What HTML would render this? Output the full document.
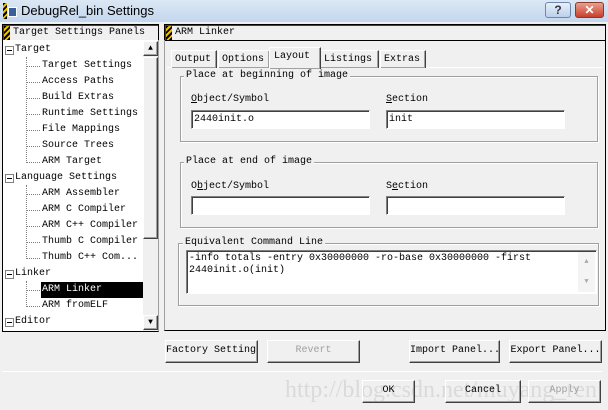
<!DOCTYPE html>
<html><head><style>
*{box-sizing:border-box;margin:0;padding:0}
body{width:608px;height:410px;background:#f0f0f0;position:relative;overflow:hidden;font-family:"Liberation Mono","Noto Sans CJK SC",monospace;font-size:10px;color:#000}
.a{position:absolute}
.t{white-space:pre;line-height:12px}
.title{left:0;top:0;width:608px;height:22px;background:linear-gradient(#dbe7f4,#c4d7ee);}
.sunk{border:1px solid;border-color:#a0a0a0 #fff #fff #a0a0a0;box-shadow:inset 1px 1px 0 #404040}
.raised{border:1px solid;border-color:#fff #404040 #404040 #fff;box-shadow:inset -1px -1px 0 #a0a0a0;background:#f0f0f0}
.grp{border:1px solid #a0a0a0;box-shadow:1px 1px 0 #fff inset,1px 1px 0 #fff}
.lab{background:#f0f0f0;padding:0 2px}
.inp{background:#fff;border:1px solid;border-color:#808080 #fff #fff #808080;box-shadow:inset 1px 1px 0 #404040}
.btn{text-align:center;line-height:20px;font-size:10px}
.icon{width:6px;height:14px;background:repeating-linear-gradient(135deg,#000 0 2px,#e8c000 2px 4px)}
.ti{position:absolute;left:42px;white-space:pre;line-height:16px;margin-top:2px}
.tr{position:absolute;left:15px;white-space:pre;line-height:16px;margin-top:2px}
.pm{position:absolute;left:5px;width:9px;height:9px;border:1px solid #808080;background:#fff;margin-top:2px}
.pm::after{content:"";position:absolute;left:1px;top:3px;width:5px;height:1px;background:#000}
.hd{position:absolute;left:27px;width:13px;border-top:1px dotted #808080}
</style></head><body>
<div class="a title"></div>
<div class="a" style="left:3px;top:3px;width:4px;height:16px;background:repeating-linear-gradient(135deg,#000 0 2px,#e8c000 2px 4px)"></div>
<div class="a" style="left:8px;top:7px;width:9px;height:10px;background:#3a5f9a;border:1px solid #fff"></div>
<div class="a" style="left:21px;top:2px;font-family:'Liberation Sans',sans-serif;font-size:13px;line-height:18px">DebugRel_bin Settings</div>
<div class="a" style="left:545px;top:2px;width:26px;height:16px;border:1px solid #6d88ad;border-radius:3px;background:linear-gradient(#e8f0fa,#bcd0ea);text-align:center;font:bold 12px 'Liberation Sans';line-height:14px;color:#334">?</div>
<div class="a" style="left:575px;top:2px;width:29px;height:16px;border:1px solid #8b3a2a;border-radius:3px;background:linear-gradient(#e8a090,#c8412c);text-align:center;font:bold 12px 'Liberation Sans';line-height:14px;color:#fff">✕</div>

<div class="a sunk" style="left:2px;top:24px;width:157px;height:17px;border-color:#000"></div>
<div class="a icon" style="left:4px;top:26px"></div>
<div class="a t" style="left:13px;top:27px">Target Settings Panels</div>
<div class="a" style="left:2px;top:40px;width:157px;height:292px;background:#fff;border:1px solid #000;border-top:none;border-right-color:#a0a0a0"></div>
<div class="a" style="left:143px;top:41px;width:15px;height:290px;background:#f0f0f0"></div>
<div class="a raised" style="left:143px;top:41px;width:15px;height:15px;font-size:8px;text-align:center;line-height:13px">▲</div>
<div class="a raised" style="left:143px;top:57px;width:15px;height:182px"></div>
<div class="a raised" style="left:143px;top:315px;width:15px;height:15px;font-size:8px;text-align:center;line-height:13px">▼</div>

<div class="a" style="left:26px;top:57px;height:106px;border-left:1px dotted #808080"></div>
<div class="a" style="left:26px;top:185px;height:74px;border-left:1px dotted #808080"></div>
<div class="a" style="left:26px;top:281px;height:26px;border-left:1px dotted #808080"></div>
<div class="pm" style="top:44px"></div><div class="tr" style="top:40px">Target</div>
<div class="hd" style="top:66px"></div><div class="ti" style="top:56px">Target Settings</div>
<div class="hd" style="top:82px"></div><div class="ti" style="top:72px">Access Paths</div>
<div class="hd" style="top:98px"></div><div class="ti" style="top:88px">Build Extras</div>
<div class="hd" style="top:114px"></div><div class="ti" style="top:104px">Runtime Settings</div>
<div class="hd" style="top:130px"></div><div class="ti" style="top:120px">File Mappings</div>
<div class="hd" style="top:146px"></div><div class="ti" style="top:136px">Source Trees</div>
<div class="hd" style="top:162px"></div><div class="ti" style="top:152px">ARM Target</div>
<div class="pm" style="top:172px"></div><div class="tr" style="top:168px">Language Settings</div>
<div class="hd" style="top:194px"></div><div class="ti" style="top:184px">ARM Assembler</div>
<div class="hd" style="top:210px"></div><div class="ti" style="top:200px">ARM C Compiler</div>
<div class="hd" style="top:226px"></div><div class="ti" style="top:216px">ARM C++ Compiler</div>
<div class="hd" style="top:242px"></div><div class="ti" style="top:232px">Thumb C Compiler</div>
<div class="hd" style="top:258px"></div><div class="ti" style="top:248px">Thumb C++ Com...</div>
<div class="pm" style="top:268px"></div><div class="tr" style="top:264px">Linker</div>
<div class="hd" style="top:290px"></div><div class="ti" style="top:280px;left:41px;width:102px;height:16px;background:#000;color:#fff;padding-left:1px">ARM Linker</div>
<div class="hd" style="top:306px"></div><div class="ti" style="top:296px">ARM fromELF</div>
<div class="pm" style="top:316px"></div><div class="tr" style="top:312px">Editor</div>

<div class="a sunk" style="left:164px;top:24px;width:442px;height:17px;border-color:#000"></div>
<div class="a icon" style="left:166px;top:26px"></div>
<div class="a t" style="left:175px;top:27px">ARM Linker</div>
<div class="a" style="left:164px;top:40px;width:442px;height:291px;border:1px solid #000;border-top:none;border-left-color:#a0a0a0"></div>
<div class="a" style="left:167px;top:67px;width:435px;height:1px;background:#fff"></div>
<div class="a raised t" style="left:171px;top:50px;width:46px;height:18px;border-bottom:none;padding:3px 3px">Output</div>
<div class="a raised t" style="left:218px;top:50px;width:52px;height:18px;border-bottom:none;padding:3px 3px">Options</div>
<div class="a raised t" style="left:320px;top:50px;width:59px;height:18px;border-bottom:none;padding:3px 3px">Listings</div>
<div class="a raised t" style="left:380px;top:50px;width:46px;height:18px;border-bottom:none;padding:3px 3px">Extras</div>
<div class="a raised t" style="left:269px;top:47px;width:52px;height:22px;border-bottom:none;padding:3px 4px">Layout</div>

<div class="a grp" style="left:180px;top:76px;width:418px;height:66px"></div>
<div class="a t lab" style="left:184px;top:70px">Place at beginning of image</div>
<div class="a t" style="left:191px;top:94px"><u>O</u>bject/Symbol</div>
<div class="a t" style="left:386px;top:94px"><u>S</u>ection</div>
<div class="a inp t" style="left:191px;top:110px;width:179px;height:19px;padding:3px 2px">2440init.o</div>
<div class="a inp t" style="left:386px;top:110px;width:179px;height:19px;padding:3px 2px">init</div>

<div class="a grp" style="left:180px;top:162px;width:418px;height:66px"></div>
<div class="a t lab" style="left:184px;top:156px">Place at end of image</div>
<div class="a t" style="left:191px;top:181px">O<u>b</u>ject/Symbol</div>
<div class="a t" style="left:386px;top:181px">S<u>e</u>ction</div>
<div class="a inp" style="left:191px;top:196px;width:179px;height:19px"></div>
<div class="a inp" style="left:386px;top:196px;width:179px;height:19px"></div>

<div class="a grp" style="left:178px;top:243px;width:421px;height:63px"></div>
<div class="a t lab" style="left:183px;top:237px">Equivalent Command Line</div>
<div class="a inp t" style="left:186px;top:250px;width:411px;height:44px;padding:2px 2px">-info totals -entry 0x30000000 -ro-base 0x30000000 -first
2440init.o(init)</div>
<div class="a" style="left:578px;top:252px;width:17px;height:40px;background:#f4f4f4;color:#aaa;font-size:7px;text-align:center;line-height:20px">▲<br>▼</div>

<div class="a raised btn t" style="left:165px;top:340px;width:93px;height:23px;line-height:20px;overflow:hidden">Factory Settings</div>
<div class="a raised btn t" style="left:267px;top:340px;width:93px;height:23px;line-height:20px;color:#a0a0a0">Revert</div>
<div class="a raised btn t" style="left:409px;top:340px;width:91px;height:23px;line-height:20px">Import Panel...</div>
<div class="a raised btn t" style="left:509px;top:340px;width:93px;height:23px;line-height:20px">Export Panel...</div>
<div class="a" style="left:2px;top:371px;width:600px;height:1px;background:#a0a0a0;border-bottom:1px solid #fff"></div>
<div class="a" style="left:285px;top:377px;font-family:'Liberation Serif',serif;font-size:24px;color:#dadada;white-space:pre">http://blog.csdn.net/muyang_ren</div>
<div class="a raised btn t" style="left:362px;top:380px;width:53px;height:23px;line-height:20px;background:transparent">OK</div>
<div class="a raised btn t" style="left:445px;top:380px;width:76px;height:23px;line-height:20px;background:transparent">Cancel</div>
<div class="a raised btn t" style="left:528px;top:380px;width:73px;height:23px;line-height:20px;background:transparent;color:#a0a0a0">Apply</div>
</body></html>
